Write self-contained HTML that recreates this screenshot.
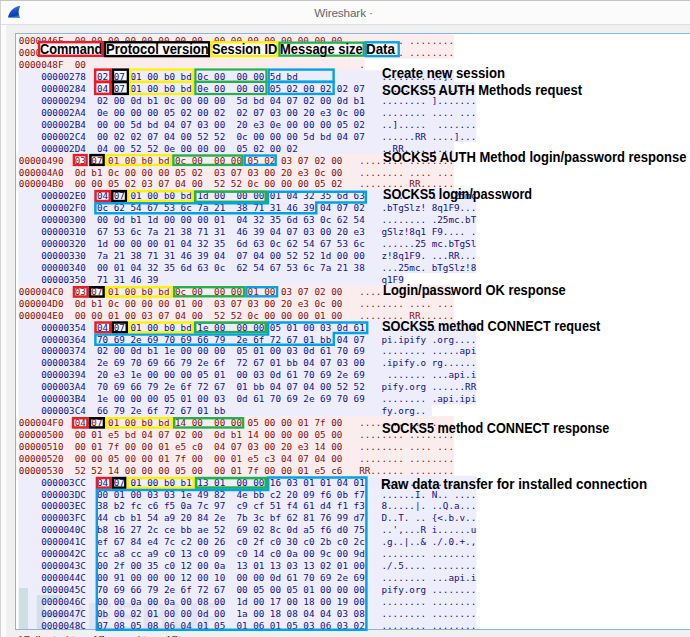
<!DOCTYPE html>
<html><head><meta charset="utf-8"><title>Wireshark</title>
<style>
html,body{margin:0;padding:0}
body{width:690px;height:637px;overflow:hidden;position:relative;background:#f0f0f0;font-family:"Liberation Sans",sans-serif}
#lf{position:absolute;left:0;top:0;width:6px;height:637px;background:#fbfbfb;border-left:1px solid #d4d4d4;box-sizing:border-box}
#tb{position:absolute;left:0;top:0;width:690px;height:25px;background:#fbfbfb;border-top:1px solid #c4c4c4;border-bottom:1px solid #dfdfdf;box-sizing:border-box}
#tbl{position:absolute;left:0;top:1px;width:1px;height:636px;background:#d4d4d4}
#title{position:absolute;left:314.2px;top:6px;white-space:pre;font-size:11.75px;line-height:14px;color:#666;letter-spacing:-0.13px}
#ta{position:absolute;left:15px;top:33px;width:700px;height:597px;box-sizing:border-box;border:1px solid #86b4e6;background:#fff}
#clip{position:absolute;left:16px;top:34px;width:674px;height:595px;overflow:hidden}
#in{position:absolute;left:-16px;top:-34px;width:690px;height:637px}
#ov,#ov2{position:absolute;left:0;top:0}
.r{position:absolute;left:18.85px;height:12px;line-height:12px;white-space:pre;font-family:"DejaVu Sans Mono","Liberation Mono",monospace;font-size:9.275px;letter-spacing:0.0px}
.r.c{color:#881010}
.r.s{color:#121288}
.lab{position:absolute;white-space:pre;font-weight:bold;font-size:13.9px;line-height:13.9px;color:#000;transform-origin:0 0;display:inline-block}
#wmb{position:absolute;left:18.7px;top:588px;width:9.6px;height:50px;background:rgba(150,200,185,0.36)}
#wm{position:absolute;left:33.5px;top:587.5px;font-weight:bold;font-size:50px;line-height:50px;color:rgba(150,200,185,0.30);white-space:pre}
#wm2{position:absolute;left:57px;top:596.6px;font-weight:bold;font-size:40px;line-height:40px;letter-spacing:0.6px;color:rgba(165,170,195,0.17);white-space:pre}
#st{position:absolute;left:0;top:634.5px;width:400px;height:3px;overflow:hidden;font-size:11.5px;line-height:14px;color:#4a4a4a}
#st span{position:absolute;top:-1.3px;white-space:pre}
#st .cb{top:0;height:3px;background:#fbeded}
#st .sb{top:0;height:3px;background:#ededfb}
#st .cf{color:#7f0000}
#st .sf{color:#00007f}
</style></head><body>
<div id="lf"></div><div id="tb"></div><div id="tbl"></div>
<svg id="ico" style="position:absolute;left:7px;top:5px" width="15" height="14" viewBox="0 0 15 14">
<defs><linearGradient id="g" x1="0.2" y1="0" x2="0.5" y2="1"><stop offset="0" stop-color="#4a98ea"/><stop offset="0.45" stop-color="#1858cc"/><stop offset="0.82" stop-color="#0a3cb4"/><stop offset="1" stop-color="#3a7ee0"/></linearGradient></defs>
<path d="M1.0,12.5 C1.9,7.4 6.0,1.9 13.4,0.8 C11.4,4.5 10.9,9 13.2,12.9 Z" fill="url(#g)"/>
</svg>
<div id="title">Wireshark ·</div>
<div id="ta"></div>
<div id="clip"><div id="in">
<svg id="ov" width="690" height="637" viewBox="0 0 690 637">
<rect x="18.35" y="34.44" width="435.74" height="12.28" fill="#fbeded"/>
<rect x="18.35" y="46.36" width="435.74" height="12.28" fill="#fbeded"/>
<rect x="18.35" y="58.29" width="346.46" height="12.28" fill="#fbeded"/>
<rect x="18.35" y="70.22" width="435.74" height="12.28" fill="#ededfb"/>
<rect x="18.35" y="82.14" width="458.06" height="12.28" fill="#ededfb"/>
<rect x="18.35" y="94.07" width="458.06" height="12.28" fill="#ededfb"/>
<rect x="18.35" y="105.99" width="458.06" height="12.28" fill="#ededfb"/>
<rect x="18.35" y="117.92" width="458.06" height="12.28" fill="#ededfb"/>
<rect x="18.35" y="129.85" width="458.06" height="12.28" fill="#ededfb"/>
<rect x="18.35" y="141.77" width="435.74" height="12.28" fill="#ededfb"/>
<rect x="18.35" y="153.70" width="435.74" height="12.28" fill="#fbeded"/>
<rect x="18.35" y="165.62" width="435.74" height="12.28" fill="#fbeded"/>
<rect x="18.35" y="177.55" width="435.74" height="12.28" fill="#fbeded"/>
<rect x="18.35" y="189.48" width="458.06" height="12.28" fill="#ededfb"/>
<rect x="18.35" y="201.40" width="458.06" height="12.28" fill="#ededfb"/>
<rect x="18.35" y="213.33" width="458.06" height="12.28" fill="#ededfb"/>
<rect x="18.35" y="225.25" width="458.06" height="12.28" fill="#ededfb"/>
<rect x="18.35" y="237.18" width="458.06" height="12.28" fill="#ededfb"/>
<rect x="18.35" y="249.11" width="458.06" height="12.28" fill="#ededfb"/>
<rect x="18.35" y="261.03" width="458.06" height="12.28" fill="#ededfb"/>
<rect x="18.35" y="272.96" width="385.52" height="12.28" fill="#ededfb"/>
<rect x="18.35" y="284.88" width="435.74" height="12.28" fill="#fbeded"/>
<rect x="18.35" y="296.81" width="435.74" height="12.28" fill="#fbeded"/>
<rect x="18.35" y="308.73" width="435.74" height="12.28" fill="#fbeded"/>
<rect x="18.35" y="320.66" width="458.06" height="12.28" fill="#ededfb"/>
<rect x="18.35" y="332.59" width="458.06" height="12.28" fill="#ededfb"/>
<rect x="18.35" y="344.51" width="458.06" height="12.28" fill="#ededfb"/>
<rect x="18.35" y="356.44" width="458.06" height="12.28" fill="#ededfb"/>
<rect x="18.35" y="368.36" width="458.06" height="12.28" fill="#ededfb"/>
<rect x="18.35" y="380.29" width="458.06" height="12.28" fill="#ededfb"/>
<rect x="18.35" y="392.22" width="458.06" height="12.28" fill="#ededfb"/>
<rect x="18.35" y="404.14" width="413.42" height="12.28" fill="#ededfb"/>
<rect x="18.35" y="416.07" width="435.74" height="12.28" fill="#fbeded"/>
<rect x="18.35" y="427.99" width="435.74" height="12.28" fill="#fbeded"/>
<rect x="18.35" y="439.92" width="435.74" height="12.28" fill="#fbeded"/>
<rect x="18.35" y="451.85" width="435.74" height="12.28" fill="#fbeded"/>
<rect x="18.35" y="463.77" width="435.74" height="12.28" fill="#fbeded"/>
<rect x="18.35" y="475.70" width="458.06" height="12.28" fill="#ededfb"/>
<rect x="18.35" y="487.62" width="458.06" height="12.28" fill="#ededfb"/>
<rect x="18.35" y="499.55" width="458.06" height="12.28" fill="#ededfb"/>
<rect x="18.35" y="511.48" width="458.06" height="12.28" fill="#ededfb"/>
<rect x="18.35" y="523.40" width="458.06" height="12.28" fill="#ededfb"/>
<rect x="18.35" y="535.33" width="458.06" height="12.28" fill="#ededfb"/>
<rect x="18.35" y="547.25" width="458.06" height="12.28" fill="#ededfb"/>
<rect x="18.35" y="559.18" width="458.06" height="12.28" fill="#ededfb"/>
<rect x="18.35" y="571.11" width="458.06" height="12.28" fill="#ededfb"/>
<rect x="18.35" y="583.03" width="458.06" height="12.28" fill="#ededfb"/>
<rect x="18.35" y="594.96" width="458.06" height="12.28" fill="#ededfb"/>
<rect x="18.35" y="606.88" width="458.06" height="12.28" fill="#ededfb"/>
<rect x="18.35" y="618.81" width="458.06" height="12.28" fill="#ededfb"/>
<rect x="95.15" y="69.65" width="15.30" height="12.00" fill="#f8f8ff"/>
<rect x="112.95" y="69.65" width="15.00" height="12.00" fill="#f8f8ff"/>
<rect x="95.15" y="82.05" width="15.30" height="11.80" fill="#f8f8ff"/>
<rect x="112.95" y="82.05" width="15.00" height="11.80" fill="#f8f8ff"/>
<rect x="73.95" y="155.15" width="12.60" height="9.70" fill="#f8f8ff"/>
<rect x="90.45" y="155.15" width="13.20" height="9.70" fill="#f8f8ff"/>
<rect x="95.55" y="191.15" width="14.20" height="9.90" fill="#f8f8ff"/>
<rect x="112.25" y="191.15" width="13.80" height="9.90" fill="#f8f8ff"/>
<rect x="73.95" y="287.25" width="13.60" height="9.30" fill="#f8f8ff"/>
<rect x="90.05" y="287.25" width="13.60" height="9.30" fill="#f8f8ff"/>
<rect x="95.55" y="322.55" width="14.70" height="9.70" fill="#f8f8ff"/>
<rect x="112.75" y="322.55" width="14.00" height="9.70" fill="#f8f8ff"/>
<rect x="73.05" y="418.25" width="14.40" height="9.20" fill="#f8f8ff"/>
<rect x="89.95" y="418.25" width="14.00" height="9.20" fill="#f8f8ff"/>
<rect x="96.95" y="478.05" width="13.50" height="9.60" fill="#f8f8ff"/>
<rect x="112.95" y="478.05" width="12.40" height="9.60" fill="#f8f8ff"/>
</svg>
<div id="wmb"></div><div id="wm">F</div><div id="wm2">REEBUF</div>
<div class="r c" style="top:34.75px">0000046F  00 00 00 00 00 00 00 00  00 00 00 00 00 00 00 00   ........ ........</div>
<div class="r c" style="top:46.75px">0000047F  00 00 00 00 00 00 00 00  00 00 00 00 00 00 00 00   ........ ........</div>
<div class="r c" style="top:58.75px">0000048F  00                                                 .</div>
<div class="r s" style="top:70.75px">    00000278  02 07 01 00 b0 bd 0c 00  00 00 5d bd               ........ ..].</div>
<div class="r s" style="top:82.75px">    00000284  04 07 01 00 b0 bd 0e 00  00 00 05 02 00 02 02 07   ........ ........</div>
<div class="r s" style="top:94.75px">    00000294  02 00 0d b1 0c 00 00 00  5d bd 04 07 02 00 0d b1   ........ ].......</div>
<div class="r s" style="top:106.75px">    000002A4  0e 00 00 00 05 02 00 02  02 07 03 00 20 e3 0c 00   ........ .... ...</div>
<div class="r s" style="top:118.75px">    000002B4  00 00 5d bd 04 07 03 00  20 e3 0e 00 00 00 05 02   ..].....  .......</div>
<div class="r s" style="top:130.75px">    000002C4  00 02 02 07 04 00 52 52  0c 00 00 00 5d bd 04 07   ......RR ....]...</div>
<div class="r s" style="top:142.75px">    000002D4  04 00 52 52 0e 00 00 00  05 02 00 02               ..RR.... ....</div>
<div class="r c" style="top:154.75px">00000490  03 07 01 00 b0 bd 0c 00  00 00 05 02 03 07 02 00   ........ ........</div>
<div class="r c" style="top:166.75px">000004A0  0d b1 0c 00 00 00 05 02  03 07 03 00 20 e3 0c 00   ........ .... ...</div>
<div class="r c" style="top:177.75px">000004B0  00 00 05 02 03 07 04 00  52 52 0c 00 00 00 05 02   ........ RR......</div>
<div class="r s" style="top:189.75px">    000002E0  04 07 01 00 b0 bd 1d 00  00 00 01 04 32 35 6d 63   ........ ....25mc</div>
<div class="r s" style="top:201.75px">    000002F0  0c 62 54 67 53 6c 7a 21  38 71 31 46 39 04 07 02   .bTgSlz! 8q1F9...</div>
<div class="r s" style="top:213.75px">    00000300  00 0d b1 1d 00 00 00 01  04 32 35 6d 63 0c 62 54   ........ .25mc.bT</div>
<div class="r s" style="top:225.75px">    00000310  67 53 6c 7a 21 38 71 31  46 39 04 07 03 00 20 e3   gSlz!8q1 F9.... .</div>
<div class="r s" style="top:237.75px">    00000320  1d 00 00 00 01 04 32 35  6d 63 0c 62 54 67 53 6c   ......25 mc.bTgSl</div>
<div class="r s" style="top:249.75px">    00000330  7a 21 38 71 31 46 39 04  07 04 00 52 52 1d 00 00   z!8q1F9. ...RR...</div>
<div class="r s" style="top:261.75px">    00000340  00 01 04 32 35 6d 63 0c  62 54 67 53 6c 7a 21 38   ...25mc. bTgSlz!8</div>
<div class="r s" style="top:273.75px">    00000350  71 31 46 39                                        q1F9</div>
<div class="r c" style="top:285.75px">000004C0  03 07 01 00 b0 bd 0c 00  00 00 01 00 03 07 02 00   ........ ........</div>
<div class="r c" style="top:297.75px">000004D0  0d b1 0c 00 00 00 01 00  03 07 03 00 20 e3 0c 00   ........ .... ...</div>
<div class="r c" style="top:309.75px">000004E0  00 00 01 00 03 07 04 00  52 52 0c 00 00 00 01 00   ........ RR......</div>
<div class="r s" style="top:321.75px">    00000354  04 07 01 00 b0 bd 1e 00  00 00 05 01 00 03 0d 61   ........ .......a</div>
<div class="r s" style="top:333.75px">    00000364  70 69 2e 69 70 69 66 79  2e 6f 72 67 01 bb 04 07   pi.ipify .org....</div>
<div class="r s" style="top:344.75px">    00000374  02 00 0d b1 1e 00 00 00  05 01 00 03 0d 61 70 69   ........ .....api</div>
<div class="r s" style="top:356.75px">    00000384  2e 69 70 69 66 79 2e 6f  72 67 01 bb 04 07 03 00   .ipify.o rg......</div>
<div class="r s" style="top:368.75px">    00000394  20 e3 1e 00 00 00 05 01  00 03 0d 61 70 69 2e 69    ....... ...api.i</div>
<div class="r s" style="top:380.75px">    000003A4  70 69 66 79 2e 6f 72 67  01 bb 04 07 04 00 52 52   pify.org ......RR</div>
<div class="r s" style="top:392.75px">    000003B4  1e 00 00 00 05 01 00 03  0d 61 70 69 2e 69 70 69   ........ .api.ipi</div>
<div class="r s" style="top:404.75px">    000003C4  66 79 2e 6f 72 67 01 bb                            fy.org..</div>
<div class="r c" style="top:416.75px">000004F0  04 07 01 00 b0 bd 14 00  00 00 05 00 00 01 7f 00   ........ ........</div>
<div class="r c" style="top:428.75px">00000500  00 01 e5 bd 04 07 02 00  0d b1 14 00 00 00 05 00   ........ ........</div>
<div class="r c" style="top:440.75px">00000510  00 01 7f 00 00 01 e5 c0  04 07 03 00 20 e3 14 00   ........ .... ...</div>
<div class="r c" style="top:452.75px">00000520  00 00 05 00 00 01 7f 00  00 01 e5 c3 04 07 04 00   ........ ........</div>
<div class="r c" style="top:464.75px">00000530  52 52 14 00 00 00 05 00  00 01 7f 00 00 01 e5 c6   RR...... ........</div>
<div class="r s" style="top:476.75px">    000003CC  04 07 01 00 b0 b1 13 01  00 00 16 03 01 01 04 01   ........ ........</div>
<div class="r s" style="top:488.75px">    000003DC  00 01 00 03 03 1e 49 82  4e bb c2 20 09 f6 0b f7   ......I. N.. ....</div>
<div class="r s" style="top:499.75px">    000003EC  38 b2 fc c6 f5 0a 7c 97  c9 cf 51 f4 61 d4 f1 f3   8.....|. ..Q.a...</div>
<div class="r s" style="top:511.75px">    000003FC  44 cb b1 54 a9 20 84 2e  7b 3c bf 62 81 76 99 d7   D..T. .. {&lt;.b.v..</div>
<div class="r s" style="top:523.75px">    0000040C  b8 16 27 2c ce bb ae 52  69 02 8c 0d a5 f6 d0 75   ..&#x27;,...R i......u</div>
<div class="r s" style="top:535.75px">    0000041C  ef 67 84 e4 7c c2 00 26  c0 2f c0 30 c0 2b c0 2c   .g..|..&amp; ./.0.+.,</div>
<div class="r s" style="top:547.75px">    0000042C  cc a8 cc a9 c0 13 c0 09  c0 14 c0 0a 00 9c 00 9d   ........ ........</div>
<div class="r s" style="top:559.75px">    0000043C  00 2f 00 35 c0 12 00 0a  13 01 13 03 13 02 01 00   ./.5.... ........</div>
<div class="r s" style="top:571.75px">    0000044C  00 91 00 00 00 12 00 10  00 00 0d 61 70 69 2e 69   ........ ...api.i</div>
<div class="r s" style="top:583.75px">    0000045C  70 69 66 79 2e 6f 72 67  00 05 00 05 01 00 00 00   pify.org ........</div>
<div class="r s" style="top:595.75px">    0000046C  00 00 0a 00 0a 00 08 00  1d 00 17 00 18 00 19 00   ........ ........</div>
<div class="r s" style="top:607.75px">    0000047C  0b 00 02 01 00 00 0d 00  1a 00 18 08 04 04 03 08   ........ ........</div>
<div class="r s" style="top:619.75px">    0000048C  07 08 05 08 06 04 01 05  01 06 01 05 03 06 03 02   ........ ........</div>
</div></div>
<svg id="ov2" width="690" height="637" viewBox="0 0 690 637">
<rect x="95.15" y="69.65" width="15.30" height="12.00" fill="none" stroke="#ed1c24" stroke-width="2.5"/>
<rect x="112.95" y="69.65" width="15.00" height="12.00" fill="none" stroke="#000000" stroke-width="2.5"/>
<rect x="130.35" y="69.55" width="62.80" height="12.20" fill="none" stroke="#fff200" stroke-width="2.3"/>
<rect x="195.40" y="69.50" width="71.00" height="12.30" fill="none" stroke="#22b14c" stroke-width="2.2"/>
<rect x="268.70" y="69.60" width="64.90" height="12.10" fill="none" stroke="#00a2e8" stroke-width="2.4"/>
<rect x="95.15" y="82.05" width="15.30" height="11.80" fill="none" stroke="#ed1c24" stroke-width="2.5"/>
<rect x="112.95" y="82.05" width="15.00" height="11.80" fill="none" stroke="#000000" stroke-width="2.5"/>
<rect x="130.35" y="81.95" width="62.80" height="12.00" fill="none" stroke="#fff200" stroke-width="2.3"/>
<rect x="195.40" y="81.90" width="71.00" height="12.10" fill="none" stroke="#22b14c" stroke-width="2.2"/>
<rect x="268.70" y="82.00" width="64.90" height="11.90" fill="none" stroke="#00a2e8" stroke-width="2.4"/>
<rect x="73.95" y="155.15" width="12.60" height="9.70" fill="none" stroke="#ed1c24" stroke-width="2.5"/>
<rect x="90.45" y="155.15" width="13.20" height="9.70" fill="none" stroke="#000000" stroke-width="2.5"/>
<rect x="106.10" y="155.10" width="64.90" height="9.80" fill="none" stroke="#fff200" stroke-width="2.4"/>
<rect x="173.40" y="155.50" width="68.90" height="9.40" fill="none" stroke="#22b14c" stroke-width="2.4"/>
<rect x="244.70" y="155.50" width="31.00" height="9.40" fill="none" stroke="#00a2e8" stroke-width="2.4"/>
<rect x="95.55" y="191.15" width="14.20" height="9.90" fill="none" stroke="#ed1c24" stroke-width="2.5"/>
<rect x="112.25" y="191.15" width="13.80" height="9.90" fill="none" stroke="#000000" stroke-width="2.5"/>
<rect x="128.55" y="191.15" width="64.10" height="9.90" fill="none" stroke="#fff200" stroke-width="2.5"/>
<rect x="195.20" y="191.60" width="70.50" height="10.30" fill="none" stroke="#22b14c" stroke-width="2.6"/>
<path d="M268,191.7 H365.8 V202.5 H316.3 V213.3 H95.4 V203.3 H268 Z" fill="none" stroke="#00a2e8" stroke-width="2.45"/>
<rect x="73.95" y="287.25" width="13.60" height="9.30" fill="none" stroke="#ed1c24" stroke-width="2.5"/>
<rect x="90.05" y="287.25" width="13.60" height="9.30" fill="none" stroke="#000000" stroke-width="2.5"/>
<rect x="106.10" y="287.20" width="65.70" height="9.40" fill="none" stroke="#fff200" stroke-width="2.4"/>
<rect x="174.20" y="287.20" width="69.80" height="9.10" fill="none" stroke="#22b14c" stroke-width="2.4"/>
<rect x="246.40" y="287.20" width="30.70" height="9.10" fill="none" stroke="#00a2e8" stroke-width="2.4"/>
<rect x="95.55" y="322.55" width="14.70" height="9.70" fill="none" stroke="#ed1c24" stroke-width="2.5"/>
<rect x="112.75" y="322.55" width="14.00" height="9.70" fill="none" stroke="#000000" stroke-width="2.5"/>
<rect x="129.25" y="322.55" width="63.40" height="9.70" fill="none" stroke="#fff200" stroke-width="2.5"/>
<rect x="195.20" y="322.60" width="70.50" height="9.60" fill="none" stroke="#22b14c" stroke-width="2.6"/>
<path d="M268.2,322.4 H367.2 V332.9 H333.8 V344.8 H95.4 V334.6 H268.2 Z" fill="none" stroke="#00a2e8" stroke-width="2.45"/>
<rect x="73.05" y="418.25" width="14.40" height="9.20" fill="none" stroke="#ed1c24" stroke-width="2.5"/>
<rect x="89.95" y="418.25" width="14.00" height="9.20" fill="none" stroke="#000000" stroke-width="2.5"/>
<rect x="106.40" y="418.20" width="65.40" height="9.30" fill="none" stroke="#fff200" stroke-width="2.4"/>
<rect x="174.20" y="418.20" width="68.90" height="9.30" fill="none" stroke="#22b14c" stroke-width="2.4"/>
<rect x="96.95" y="478.05" width="13.50" height="9.60" fill="none" stroke="#ed1c24" stroke-width="2.5"/>
<rect x="112.95" y="478.05" width="12.40" height="9.60" fill="none" stroke="#000000" stroke-width="2.5"/>
<rect x="127.85" y="478.05" width="65.70" height="9.60" fill="none" stroke="#fff200" stroke-width="2.5"/>
<rect x="196.10" y="478.10" width="69.60" height="9.50" fill="none" stroke="#22b14c" stroke-width="2.6"/>
<path d="M268.2,477.5 H366.4 V629.8 H96.8 V489.9 H268.2 Z" fill="none" stroke="#00a2e8" stroke-width="2.45"/>
<rect x="39.00" y="42.20" width="63.70" height="13.60" fill="#fefafa" stroke="#ed1c24" stroke-width="2.4"/>
<rect x="105.00" y="42.30" width="104.20" height="13.80" fill="#fefafa" stroke="#000000" stroke-width="2.4"/>
<rect x="211.30" y="42.30" width="66.00" height="13.80" fill="#fefafa" stroke="#fff200" stroke-width="2.4"/>
<rect x="279.45" y="42.65" width="84.20" height="13.00" fill="#fefafa" stroke="#22b14c" stroke-width="2.3"/>
<rect x="365.70" y="42.30" width="33.00" height="13.80" fill="#fefafa" stroke="#00a2e8" stroke-width="2.4"/>
</svg>
<span class="lab" style="left:381.70px;top:66.83px;transform:scaleX(0.9491)">Create new session</span>
<span class="lab" style="left:381.79px;top:83.83px;transform:scaleX(0.9348)">SOCKS5 AUTH Methods request</span>
<span class="lab" style="left:382.59px;top:150.83px;transform:scaleX(0.9376)">SOCKS5 AUTH Method login/password response</span>
<span class="lab" style="left:382.61px;top:187.83px;transform:scaleX(0.9158)">SOCKS5 login/password</span>
<span class="lab" style="left:382.79px;top:283.83px;transform:scaleX(0.9287)">Login/password OK response</span>
<span class="lab" style="left:382.41px;top:319.83px;transform:scaleX(0.9184)">SOCKS5 method CONNECT request</span>
<span class="lab" style="left:382.11px;top:421.83px;transform:scaleX(0.9117)">SOCKS5 method CONNECT response</span>
<span class="lab" style="left:380.95px;top:477.83px;transform:scaleX(0.9605)">Raw data transfer for installed connection</span>
<span class="lab" style="left:40.22px;top:42.83px;transform:scaleX(0.9185)">Command</span>
<span class="lab" style="left:105.98px;top:42.83px;transform:scaleX(0.9368)">Protocol version</span>
<span class="lab" style="left:211.51px;top:42.83px;transform:scaleX(0.9176)">Session ID</span>
<span class="lab" style="left:280.18px;top:42.83px;transform:scaleX(0.9322)">Message size</span>
<span class="lab" style="left:366.35px;top:42.83px;transform:scaleX(0.9628)">Data</span>
<div id="st"><span class="cb" style="left:29.6px;width:26.9px"></span><span class="sb" style="left:103px;width:25px"></span><span style="left:17.6px;letter-spacing:-0.6px">17</span><span class="cf" style="left:30px;letter-spacing:-0.15px">client</span><span style="left:59.5px">pkts,</span><span style="left:92.4px;letter-spacing:-0.6px">17</span><span class="sf" style="left:103.4px;letter-spacing:-0.6px">server</span><span style="left:131px">pkts,</span><span style="left:165.5px;letter-spacing:-0.6px">17</span><span style="left:178px">turns.</span></div>
</body></html>
